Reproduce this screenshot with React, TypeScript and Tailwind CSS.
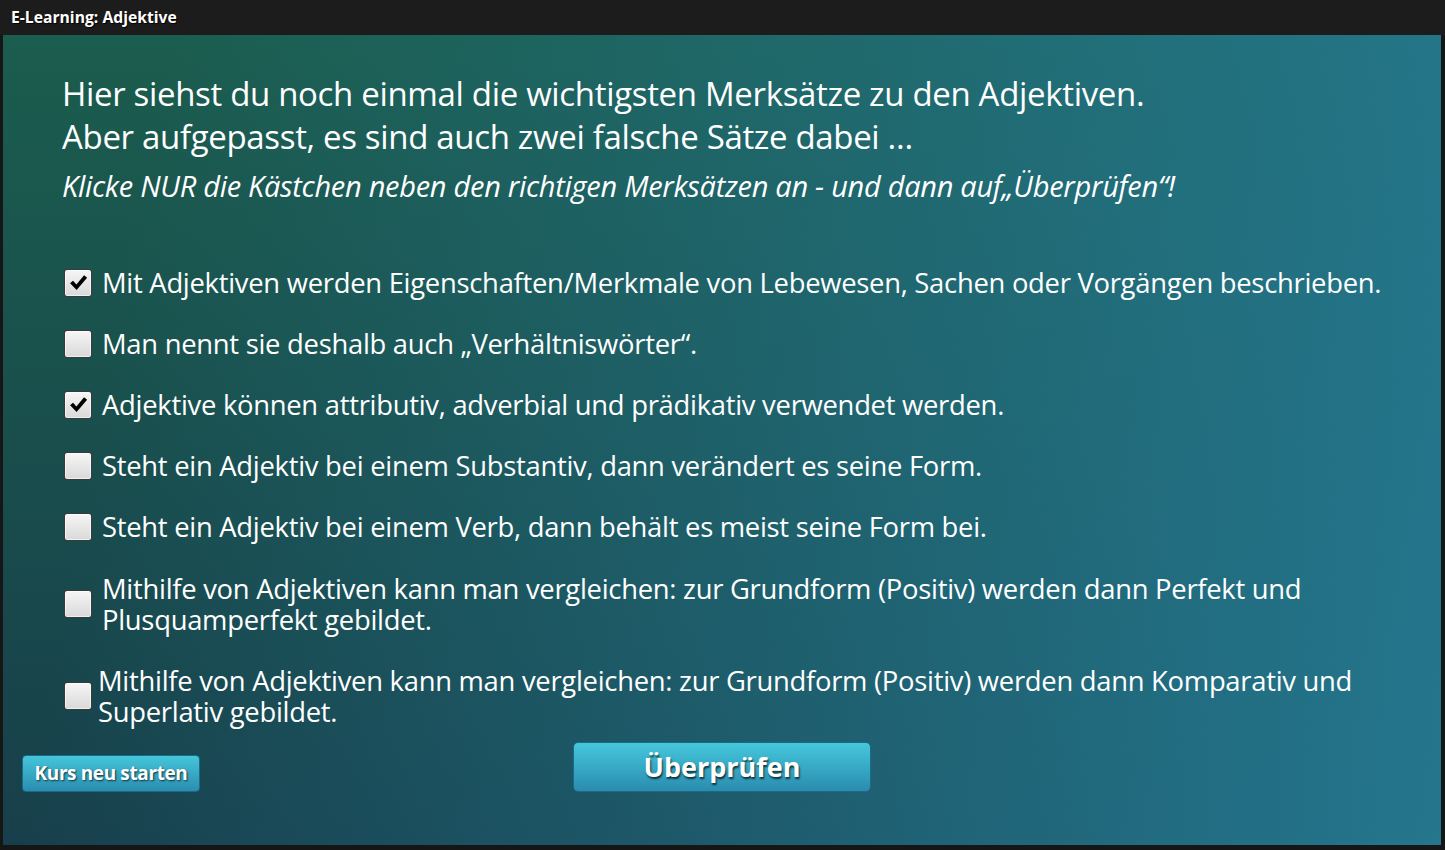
import { useState } from 'react';

const items = [
    { text: 'Mit Adjektiven werden Eigenschaften/Merkmale von Lebewesen, Sachen oder Vorgängen beschrieben.', checked: true },
    { text: 'Man nennt sie deshalb auch „Verhältniswörter“.', checked: false },
    { text: 'Adjektive können attributiv, adverbial und prädikativ verwendet werden.', checked: true },
    { text: 'Steht ein Adjektiv bei einem Substantiv, dann verändert es seine Form.', checked: false },
    { text: 'Steht ein Adjektiv bei einem Verb, dann behält es meist seine Form bei.', checked: false },
    { text: 'Mithilfe von Adjektiven kann man vergleichen: zur Grundform (Positiv) werden dann Perfekt und Plusquamperfekt gebildet.', checked: false },
    { text: 'Mithilfe von Adjektiven kann man vergleichen: zur Grundform (Positiv) werden dann Komparativ und Superlativ gebildet.', checked: false },
];

function Checkbox({ checked, onToggle }: { checked: boolean; onToggle: () => void }) {
    return (
        <button
            type="button"
            onClick={onToggle}
            className="w-[28px] h-[28px] shrink-0 rounded-[3px] border border-[#3a3a3a] bg-[linear-gradient(to_bottom,#f6f6f6,#d9d9d9)] shadow-[inset_0_0_0_1px_rgba(255,255,255,0.6)] flex items-center justify-center"
        >
            {checked && (
                <svg width="21" height="21" viewBox="0 0 20 20">
                    <path d="M2 10.8 L4.8 8.4 L8 11.8 L15.3 3.2 L18.2 5.4 L8.2 17.2 Z" fill="#000" />
                </svg>
            )}
        </button>
    );
}

export default function App() {
    const [checks, setChecks] = useState(items.map(i => i.checked));

    const toggle = (idx: number) => {
        setChecks(prev => prev.map((c, i) => (i === idx ? !c : c)));
    };

    return (
        <div className="w-[1445px] h-[850px] bg-[#161616] flex flex-col font-['Open_Sans',sans-serif] text-white overflow-hidden">
            {/* Titelleiste */}
            <div className="h-[35px] shrink-0 bg-[#1c1c1c] flex items-center pl-[11px]">
                <span className="text-[15.7px] font-bold [text-shadow:1px_1px_1px_#000]">E-Learning: Adjektive</span>
            </div>

            {/* Inhalt */}
            <div className="flex-1 ml-[3px] mr-[4px] mb-[5px] bg-[linear-gradient(100deg,rgba(0,0,0,0)_10%,rgba(37,121,145,0.95)_100%),linear-gradient(to_bottom,#1b5d4e,#173f4b)] flex flex-col pl-[59px] pr-[40px] pt-[37px]">
                <h1 className="text-[33px] leading-[43px] [font-stretch:90%] tracking-[-0.01em]">
                    Hier siehst du noch einmal die wichtigsten Merksätze zu den Adjektiven.
                    <br />
                    Aber aufgepasst, es sind auch zwei falsche Sätze dabei …
                </h1>
                <p className="mt-[10px] text-[29px] italic leading-[36px] [font-stretch:90%] tracking-[-0.01em]">
                    Klicke NUR die Kästchen neben den richtigen Merksätzen an - und dann auf„Überprüfen“!
                </p>

                {/* Merksätze */}
                <div className="mt-[63px] flex flex-col">
                    {items.map((item, idx) => (
                        <div
                            key={idx}
                            className={
                                idx === 0
                                    ? 'flex items-center gap-[10px] pl-[2px]'
                                    : idx === 5
                                      ? 'flex items-center gap-[10px] pl-[2px] mt-[31px]'
                                      : idx === 6
                                        ? 'flex items-center gap-[6px] pl-[2px] mt-[30px]'
                                        : 'flex items-center gap-[10px] pl-[2px] mt-[30px]'
                            }
                        >
                            <Checkbox checked={checks[idx]} onToggle={() => toggle(idx)} />
                            <span className="text-[27.4px] leading-[31px] [font-stretch:90%] tracking-[-0.01em]">{item.text}</span>
                        </div>
                    ))}
                </div>

                {/* Tombol */}
                <div className="relative flex-1">
                    <button
                        type="button"
                        className="absolute left-[-40px] top-[28px] w-[178px] h-[37px] rounded-[4px] border border-[#1d6a86] bg-[linear-gradient(to_bottom,#45c6da,#2a8db0)] text-[19px] font-bold tracking-[-0.02em] [font-stretch:90%] [text-shadow:1px_1px_2px_rgba(0,0,0,0.7)]"
                    >
                        Kurs neu starten
                    </button>
                    <button
                        type="button"
                        className="absolute left-[511px] top-[15px] w-[298px] h-[50px] rounded-[5px] border border-[#1d6a86] bg-[linear-gradient(to_bottom,#45c7db,#2a8cb0)] text-[27px] font-bold [font-stretch:90%] [text-shadow:1px_2px_2px_rgba(0,0,0,0.7)]"
                    >
                        Überprüfen
                    </button>
                </div>
            </div>
        </div>
    );
}
